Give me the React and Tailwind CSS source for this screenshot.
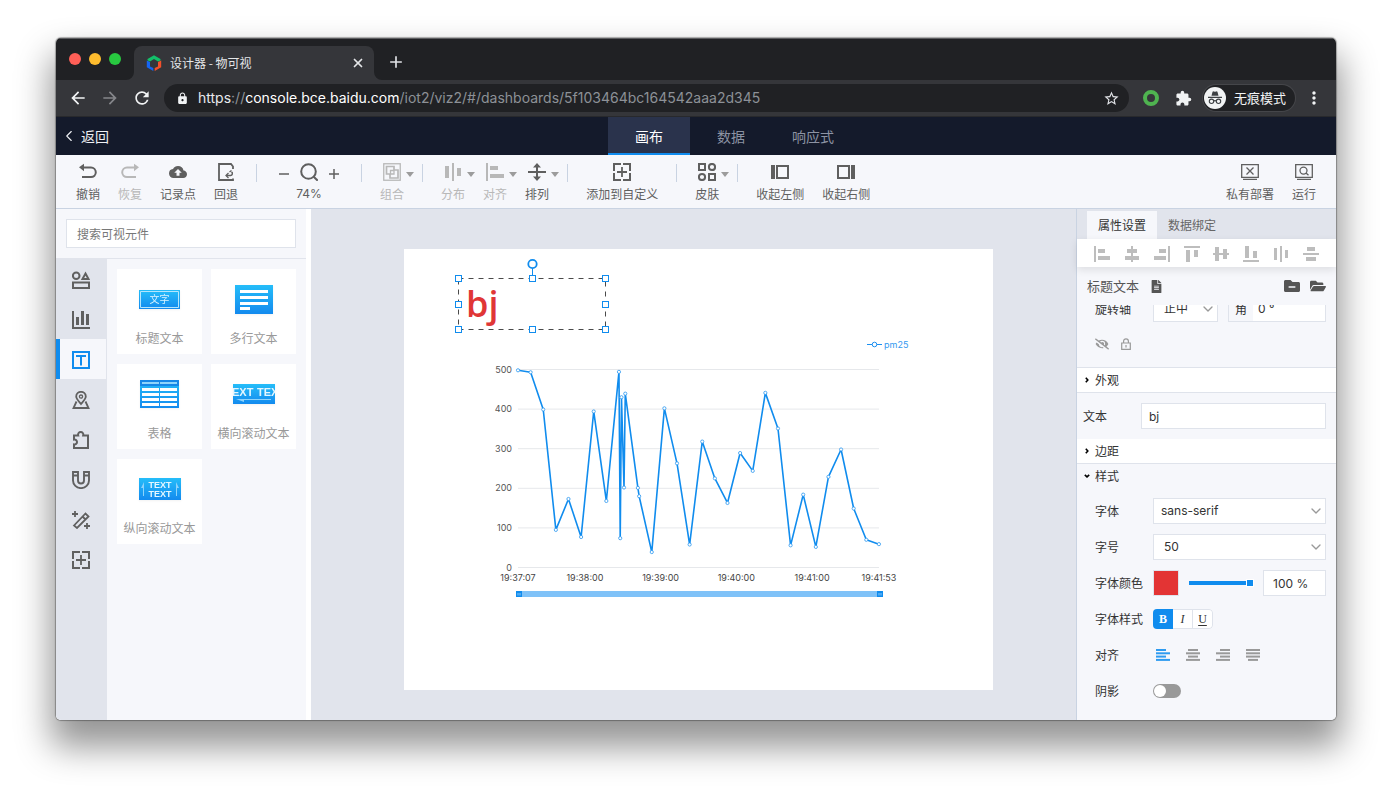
import React from "react";
import {
  MdAdd,
  MdArrowBack,
  MdArrowForward,
  MdCloudUpload,
  MdExtension,
  MdLock,
  MdMoreVert,
  MdRefresh,
  MdStarBorder,
} from "react-icons/md";
import { FaEyeSlash, FaFileAlt, FaFolderMinus, FaFolderOpen } from "react-icons/fa";
import { ChevronDown, ChevronLeft, X } from "lucide-react";

function Svg({ w = 18, h = 18, className = "", children, ...rest }) {
  return (
    <svg
      width={w}
      height={h}
      viewBox={`0 0 ${w} ${h}`}
      fill="none"
      stroke="currentColor"
      strokeWidth="2"
      aria-hidden="true"
      className={`shrink-0 ${className}`}
      {...rest}
    >
      {children}
    </svg>
  );
}

/* ---------- toolbar icons ---------- */

const UndoIcon = () => (
  <Svg>
    <path d="M3 4.5h9a4.800 4.800 0 0 1 0 9.600H3" />
    <path d="M5 .8v7.400L0 4.200z" fill="currentColor" stroke="none" />
  </Svg>
);
const RedoIcon = () => (
  <Svg>
    <path d="M15 4.500H6a4.800 4.800 0 0 0 0 9.600h9" />
    <path d="M13 .8v7.400l5-4z" fill="currentColor" stroke="none" />
  </Svg>
);
const RevertIcon = () => (
  <Svg>
    <path d="M16 6V3.500L14 1H2v16h14v-1.500" strokeWidth="1.800" />
    <path d="M9.500 12.500h4a1.900 1.900 0 0 0 1-3.500" strokeWidth="1.500" />
    <path d="M11.500 10l-2.500 2.500 2.500 2.500M12.500 9l2-1.500" strokeWidth="1.300" />
  </Svg>
);
const SearchIcon = () => (
  <Svg>
    <circle cx="8.500" cy="8.500" r="7.300" />
    <path d="M13.700 13.700l4 4" />
  </Svg>
);
const GroupIcon = () => (
  <Svg strokeWidth="1.700">
    <rect x=".75" y=".75" width="16.500" height="16.500" strokeWidth="1.300" />
    <path d="M11 7V3.500H3.500V11H7" />
    <path d="M11 7h4v8H7v-4" />
    <path d="M7.500 7.500h3.500v3.500H7.500z" strokeWidth="1.300" />
  </Svg>
);
const DistributeIcon = () => (
  <Svg stroke="none" fill="currentColor">
    <path d="M1 3h4v12H1zM8 0h2v18H8zM13 5h4v8h-4z" />
  </Svg>
);
const AlignIcon = () => (
  <Svg stroke="none" fill="currentColor">
    <path d="M0 0h2v18H0zM4 3h8v4H4zM4 11h14v4H4z" />
  </Svg>
);
const ArrangeIcon = () => (
  <Svg>
    <path d="M0 9h18M9 2.500v13" />
    <path d="M9 0l4 4.500H5zM9 18l4-4.500H5z" fill="currentColor" stroke="none" />
  </Svg>
);
const CustomIcon = () => (
  <Svg>
    <path d="M8 1H1v7M10 1h7v7M8 17H1v-7M10 17h7v-7" />
    <path d="M9 4v10M4 9h10" strokeWidth="1.800" />
  </Svg>
);
const SkinIcon = () => (
  <Svg>
    <path d="M1 1h6v6H1zM11 11h6v6h-6z" />
    <circle cx="14" cy="4" r="3.100" />
    <circle cx="4" cy="14" r="3.100" />
  </Svg>
);
const LeftIcon = () => (
  <Svg>
    <path d="M0 2h4v14H0z" fill="currentColor" stroke="none" />
    <path d="M6 3h11v12H6z" />
  </Svg>
);
const RightIcon = () => (
  <Svg>
    <path d="M14 2h4v14h-4z" fill="currentColor" stroke="none" />
    <path d="M1 3h11v12H1z" />
  </Svg>
);
const DeployIcon = () => (
  <Svg strokeWidth="1.300">
    <path d="M.7 1.700h16.600v12.600H.7zM2 16.400h14" />
    <path d="M5.500 4.500l7 7M12.500 4.500l-7 7" />
  </Svg>
);
const RunIcon = () => (
  <Svg strokeWidth="1.300">
    <path d="M.7 1.700h16.600v12.600H.7zM2 16.400h14" />
    <circle cx="8.500" cy="7.600" r="3.500" />
    <path d="M11 10l2.500 2.300" />
  </Svg>
);

const Sep = () => <span className="mx-[9px] mt-[9px] h-[18px] w-px shrink-0 bg-[#c9d3e2]" />;

function Tool({ label, icon, disabled, menu }) {
  return (
    <button
      type="button"
      disabled={disabled}
      className={`relative flex h-full shrink-0 flex-col items-center gap-1 px-[9px] pt-2 ${
        disabled ? "text-[#b8b8b8]" : "text-[#5f5f5f]"
      }`}
    >
      {icon}
      <span className="text-xs leading-[18px] whitespace-nowrap">{label}</span>
      {menu && (
        <span className="absolute top-[17px] -right-px h-0 w-0 border-x-4 border-t-[5px] border-x-transparent border-t-[#9c9c9c]" />
      )}
    </button>
  );
}

/* ---------- browser chrome ---------- */

function TitleBar() {
  return (
    <div className="flex h-[42px] items-end border-t border-[#5c5d60] bg-[#202124] pl-[13px]">
      <div className="mb-[15px] flex gap-2">
        <span className="size-3 rounded-full bg-[#ff5f57]" />
        <span className="size-3 rounded-full bg-[#febc2e]" />
        <span className="size-3 rounded-full bg-[#28c840]" />
      </div>
      <div className="relative ml-[13px] flex h-[34px] w-[240px] items-center rounded-t-lg bg-[#35363a] pr-[9px] pl-3 text-[#e4e6e8]">
        <svg className="absolute bottom-0 -left-2" width="8" height="8" viewBox="0 0 8 8" aria-hidden="true">
          <path d="M8 0v8H0a8 8 0 0 0 8-8z" fill="#35363a" />
        </svg>
        <svg className="absolute -right-2 bottom-0" width="8" height="8" viewBox="0 0 8 8" aria-hidden="true">
          <path d="M0 0v8h8a8 8 0 0 1-8-8z" fill="#35363a" />
        </svg>
        <svg width="16" height="16" viewBox="0 0 16 16" aria-hidden="true">
          <path d="M1.500 4L8 .3 14.500 4v1.500L12 6.500 8 4 4 6.500 1.500 5.200z" fill="#12c06a" />
          <path d="M.8 5.500L4 7v4.500L7.300 13v3L.8 12.200z" fill="#1665f2" />
          <path d="M15.200 5.500L12 7v4.500L8.700 13v3l6.500-3.800z" fill="#f4502b" />
        </svg>
        <span className="ml-2 flex-1 text-xs">设计器 - 物可视</span>
        <button type="button" aria-label="关闭标签页">
          <X size={14} strokeWidth={3} />
        </button>
      </div>
      <button type="button" aria-label="新标签页" className="mb-2 ml-3 text-[#dfe1e5]">
        <MdAdd size={20} />
      </button>
    </div>
  );
}

function AddressBar() {
  return (
    <div className="flex h-[37px] items-center border-b border-[#28292c] bg-[#35363a] pr-3 pl-3 text-[#f1f3f4]">
      <button type="button" aria-label="后退">
        <MdArrowBack size={20} />
      </button>
      <button type="button" aria-label="前进" disabled className="ml-3 text-[#85868a]">
        <MdArrowForward size={20} />
      </button>
      <button type="button" aria-label="刷新" className="ml-3">
        <MdRefresh size={20} />
      </button>
      <div className="ml-3 flex h-7 min-w-0 flex-1 items-center rounded-full bg-[#202124] pr-[9px] pl-3">
        <MdLock size={13} className="shrink-0" />
        <div className="ml-[9px] min-w-0 flex-1 truncate font-[Inter] text-sm text-[#8d9197]">
          <span className="text-[#e8eaed]">https</span>://
          <span className="text-white">console.bce.baidu.com</span>
          /iot2/viz2/#/dashboards/5f103464bc164542aaa2d345
        </div>
        <button type="button" aria-label="收藏">
          <MdStarBorder size={17} className="text-[#dfe1e5]" />
        </button>
      </div>
      <span className="ml-[14px] size-4 rounded-full border-4 border-[#4fb350]" />
      <MdExtension size={17} className="ml-4" />
      <div className="ml-[11px] flex h-[26px] items-center gap-2 rounded-full bg-[#202124] pr-[9px] pl-px ring-1 ring-[#45464a]">
        <svg width="22" height="22" viewBox="0 0 22 22" aria-hidden="true">
          <circle cx="11" cy="11" r="11" fill="#f1f3f4" />
          <path d="M7.500 8.800l1-3.800q.3-.9 1.200-.6l1.300.4 1.300-.4q.9-.3 1.200.6l1 3.800z" fill="#3c4043" />
          <path d="M4 10.300h14" stroke="#3c4043" strokeWidth="1.300" />
          <g fill="none" stroke="#3c4043" strokeWidth="1.100">
            <circle cx="7.500" cy="14.300" r="2.200" />
            <circle cx="14.500" cy="14.300" r="2.200" />
            <path d="M9.700 14q1.300-.8 2.600 0" />
          </g>
        </svg>
        <span className="text-[13px] whitespace-nowrap">无痕模式</span>
      </div>
      <button type="button" aria-label="更多" className="ml-[9px]">
        <MdMoreVert size={20} />
      </button>
    </div>
  );
}

function AppHeader() {
  const tabs = ["画布", "数据", "响应式"];
  return (
    <header className="flex h-[38px] bg-[#141a2b] text-sm">
      <a href="#back" className="flex w-[70px] shrink-0 items-center pl-1 text-[#eef0f4]">
        <ChevronLeft size={18} strokeWidth={1.500} />
        <span className="ml-[3px]">返回</span>
      </a>
      <nav className="flex flex-1 justify-center">
        {tabs.map((t, i) => (
          <button
            key={t}
            type="button"
            className={`w-[82px] border-b-2 pt-px ${
              i === 0 ? "border-[#108cee] bg-[#2a334c] text-white" : "border-transparent text-[#8c93a3]"
            }`}
          >
            {t}
          </button>
        ))}
      </nav>
    </header>
  );
}

function Toolbar() {
  return (
    <div className="flex h-[54px] border-b border-[#c9d3e2] bg-[#f6f7fb] px-[11px]">
      <Tool label="撤销" icon={<UndoIcon />} />
      <Tool label="恢复" icon={<RedoIcon />} disabled />
      <Tool label="记录点" icon={<MdCloudUpload size={18} />} />
      <Tool label="回退" icon={<RevertIcon />} />
      <Sep />
      <div className="flex w-[86px] shrink-0 flex-col items-center gap-1 pt-2 text-[#5f5f5f]">
        <div className="flex items-center gap-[11px]">
          <button type="button" aria-label="缩小">
            <Svg w={10} strokeWidth="1.500">
              <path d="M0 11h10" />
            </Svg>
          </button>
          <SearchIcon />
          <button type="button" aria-label="放大">
            <Svg w={10} strokeWidth="1.500">
              <path d="M0 11h10M5 6v10" />
            </Svg>
          </button>
        </div>
        <span className="font-[Inter] text-xs leading-[18px]">74%</span>
      </div>
      <Sep />
      <Tool label="组合" icon={<GroupIcon />} disabled menu />
      <Sep />
      <Tool label="分布" icon={<DistributeIcon />} disabled menu />
      <Tool label="对齐" icon={<AlignIcon />} disabled menu />
      <Tool label="排列" icon={<ArrangeIcon />} menu />
      <Sep />
      <Tool label="添加到自定义" icon={<CustomIcon />} />
      <Sep />
      <Tool label="皮肤" icon={<SkinIcon />} menu />
      <Sep />
      <Tool label="收起左侧" icon={<LeftIcon />} />
      <Tool label="收起右侧" icon={<RightIcon />} />
      <div className="flex-1" />
      <Tool label="私有部署" icon={<DeployIcon />} />
      <Tool label="运行" icon={<RunIcon />} />
    </div>
  );
}

/* ---------- left panel ---------- */

const railIcons = [
  {
    name: "图形",
    icon: (
      <Svg>
        <circle cx="4.200" cy="4.800" r="3.300" />
        <path d="M13.500 2.500l3 5.500h-6z" />
        <path d="M1 11.500h16V17H1z" />
      </Svg>
    ),
  },
  {
    name: "图表",
    icon: (
      <Svg stroke="none" fill="currentColor">
        <path d="M0 0h2v16h16v2H0zM4 6h3v8H4zM9 0h3v14H9zM14 3h3v11h-3z" />
      </Svg>
    ),
  },
  {
    name: "文本",
    icon: (
      <Svg>
        <path d="M1 1h16v16H1z" />
        <path d="M4 5h10M9 5v9.500" />
      </Svg>
    ),
  },
  {
    name: "地图",
    icon: (
      <Svg strokeWidth="1.800">
        <path d="M9 13C6 9.500 4.200 7.800 4.200 5.600a4.800 4.800 0 0 1 9.600 0C13.800 7.800 12 9.500 9 13z" />
        <circle cx="9" cy="5.600" r="1.600" strokeWidth="1.300" />
        <path d="M4.500 10.500L1.500 17h15l-3-6.500" />
      </Svg>
    ),
  },
  {
    name: "插件",
    icon: (
      <Svg>
        <path d="M2 4.500h4.200c-.6-2 .8-3.500 2.500-3.500s3.100 1.500 2.500 3.500H16V17H2v-3.600c4 .6 4-5.400 0-4.800z" />
      </Svg>
    ),
  },
  {
    name: "磁铁",
    icon: (
      <Svg strokeWidth="1.900">
        <path d="M1 1h5v8.500a3 3 0 0 0 6 0V1h5v8.500a8 7.600 0 0 1-16 0zM1 4.500h5M12 4.500h5" />
      </Svg>
    ),
  },
  {
    name: "特效",
    icon: (
      <Svg strokeWidth="1.800">
        <path d="M2 14.500L13.500 2.500l3 3L5 17zM10.500 5.500l3 3" />
        <path d="M3 0v6M0 3h6M15 12v6M12 15h6" />
      </Svg>
    ),
  },
  { name: "自定义", icon: <CustomIcon /> },
];

function Gradient({ id }) {
  return (
    <defs>
      <linearGradient id={id} x1="0" y1="0" x2="0" y2="1">
        <stop offset="0" stopColor="#25bdf9" />
        <stop offset="1" stopColor="#138aee" />
      </linearGradient>
    </defs>
  );
}

const glyphText = { fill: "#e4f6ff", fontFamily: '"Liberation Sans", sans-serif', fontWeight: 700 };

const widgets = [
  {
    label: "标题文本",
    art: (
      <svg width="41" height="19" viewBox="0 0 41 19" aria-hidden="true" className="drop-shadow-xs">
        <Gradient id="g1" />
        <rect width="41" height="19" fill="url(#g1)" />
        <path d="M1.500 1.500h38v16h-38z" fill="none" stroke="#b5e6fd" />
        <text x="20.500" y="13" textAnchor="middle" fontSize="10" fill="#d9f3ff">
          文字
        </text>
      </svg>
    ),
  },
  {
    label: "多行文本",
    art: (
      <svg width="38" height="29" viewBox="0 0 38 29" aria-hidden="true" className="drop-shadow-xs">
        <Gradient id="g2" />
        <rect width="38" height="29" fill="url(#g2)" />
        <path d="M5 5h28v3H5zM5 11h28v3H5zM5 17h28v3H5zM5 22h10v3H5z" fill="#fff" />
      </svg>
    ),
  },
  {
    label: "表格",
    art: (
      <svg width="39" height="28" viewBox="0 0 39 28" aria-hidden="true" className="drop-shadow-xs">
        <Gradient id="g3" />
        <rect width="39" height="28" fill="url(#g3)" />
        <rect width="39" height="6" fill="#1787e6" />
        <path d="M2 3h17M20 3h17" stroke="#8ed4fb" strokeWidth="2" />
        <path
          d="M2 9.500h17M20 9.500h17M2 14.500h17M20 14.500h17M2 19.500h17M20 19.500h17M2 24.500h17M20 24.500h17"
          stroke="#fff"
          strokeWidth="3"
        />
      </svg>
    ),
  },
  {
    label: "横向滚动文本",
    art: (
      <svg width="42" height="20" viewBox="0 0 42 20" aria-hidden="true" className="drop-shadow-xs">
        <Gradient id="g4" />
        <rect width="42" height="20" fill="url(#g4)" />
        <text x="-1" y="12" fontSize="11" {...glyphText}>
          EXT
        </text>
        <text x="24" y="12" fontSize="11" {...glyphText}>
          TEX
        </text>
        <path d="M3 15h35v1H11v2z" fill="#8dd3fb" />
      </svg>
    ),
  },
  {
    label: "纵向滚动文本",
    art: (
      <svg width="42" height="22" viewBox="0 0 42 22" aria-hidden="true" className="drop-shadow-xs">
        <Gradient id="g5" />
        <rect width="42" height="22" fill="url(#g5)" />
        <text x="21" y="10" textAnchor="middle" fontSize="9" {...glyphText}>
          TEXT
        </text>
        <text x="21" y="19" textAnchor="middle" fontSize="9" {...glyphText}>
          TEXT
        </text>
        <path d="M5 4v14H4V10H2zM37 4v14h1V10h2z" fill="#8dd3fb" />
      </svg>
    ),
  },
];

function LeftPanel() {
  return (
    <aside className="flex w-[255px] shrink-0 flex-col border-r-[5px] border-white bg-[#f6f7fb]">
      <div className="border-b border-[#e1e4ec] p-[10px]">
        <input
          type="search"
          aria-label="搜索可视元件"
          placeholder="搜索可视元件"
          className="block h-[29px] w-full border border-[#dfe3eb] bg-white px-[10px] text-xs outline-none placeholder:text-[#777]"
        />
      </div>
      <div className="flex flex-1">
        <nav className="flex w-[51px] shrink-0 flex-col border-r border-[#e1e4ec] bg-[#e1e4ec]">
          {railIcons.map((r, i) => (
            <button
              key={r.name}
              type="button"
              aria-label={r.name}
              className={`flex h-10 items-center border-l-4 pt-[2px] pl-3 ${
                i === 2 ? "border-[#108cee] bg-[#f6f7fb] text-[#108cee]" : "border-transparent text-[#606060]"
              }`}
            >
              {r.icon}
            </button>
          ))}
        </nav>
        <div className="grid flex-1 auto-rows-[85px] grid-cols-2 gap-x-[9px] gap-y-[10px] p-[10px]">
          {widgets.map((w) => (
            <button key={w.label} type="button" className="flex flex-col items-center bg-white pt-[10px]">
              <span className="flex h-10 items-center">{w.art}</span>
              <span className="mt-[11px] text-xs leading-4 whitespace-nowrap text-[#999]">{w.label}</span>
            </button>
          ))}
        </div>
      </div>
    </aside>
  );
}

/* ---------- canvas ---------- */

const samples = [
  [0, 498], [10, 493], [20, 399], [30, 95], [40, 173], [50, 77], [60, 394], [70, 168],
  [80, 494], [81, 74], [82, 430], [84, 202], [85, 439], [95, 201], [96, 180], [106, 39],
  [116, 402], [126, 263], [136, 58], [146, 318], [156, 225], [166, 163], [176, 289],
  [186, 244], [196, 441], [206, 351], [216, 56], [226, 184], [236, 52], [246, 229],
  [256, 298], [266, 149], [276, 70], [286, 59],
];
const px = (t) => 30 + t * 1.262;
const py = (v) => 228.5 - v * 0.396;
const ticks = [[0, "19:37:07"], [53, "19:38:00"], [113, "19:39:00"], [173, "19:40:00"], [233, "19:41:00"], [286, "19:41:53"]];

function Chart() {
  return (
    <svg
      className="absolute top-[90px] left-[84px]"
      width="430"
      height="265"
      viewBox="0 0 430 265"
      role="img"
      aria-label="pm25"
      fontFamily="Inter, sans-serif"
      fontSize="9"
    >
      <g stroke="#1b8ff0" fill="#fff">
        <path d="M379 5.500h15" />
        <circle cx="386.500" cy="5.500" r="2.300" />
      </g>
      <text x="396" y="9" fill="#3399f0">
        pm25
      </text>
      {[0, 100, 200, 300, 400, 500].map((v) => (
        <g key={v}>
          <path d={`M30 ${py(v)}h361`} stroke="#e6e8eb" />
          <text x="24" y={py(v) + 3} textAnchor="end" fill="#555">
            {v}
          </text>
        </g>
      ))}
      {ticks.map(([t, label]) => (
        <text key={t} x={px(t)} y="242" textAnchor="middle" fill="#444">
          {label}
        </text>
      ))}
      <polyline
        points={samples.map(([t, v]) => `${px(t)},${py(v)}`).join(" ")}
        fill="none"
        stroke="#108cee"
        strokeWidth="1.600"
        strokeLinejoin="round"
      />
      {samples.map(([t, v]) => (
        <circle key={t} cx={px(t)} cy={py(v)} r="1.600" fill="#fff" stroke="#2a97f0" strokeWidth=".8" />
      ))}
      <rect x="28" y="252" width="366" height="6" fill="#7fc2f8" />
      <path d="M28 252h6v6h-6zM389 252h6v6h-6z" fill="#108cee" />
      <path d="M30 254v2.500M32 254v2.500M391 254v2.500M393 254v2.500" stroke="#bfe0fb" strokeWidth=".7" />
    </svg>
  );
}

function SelectionFrame() {
  const xs = [4.5, 78.5, 151.5];
  const ys = [18.5, 44.5, 69.5];
  return (
    <svg
      className="absolute top-[11px] left-[50px] overflow-visible"
      width="156"
      height="74"
      viewBox="0 0 156 74"
      aria-hidden="true"
    >
      <rect x="4.500" y="18.500" width="147" height="51" fill="none" stroke="#4a4a4a" strokeDasharray="5 5" />
      <path d="M78.500 8v8" stroke="#108cee" />
      <circle cx="78.500" cy="4" r="4.200" fill="#fff" stroke="#108cee" strokeWidth="1.800" />
      {ys.map((y, r) =>
        xs.map((x, c) =>
          r === 1 && c === 1 ? null : (
            <rect key={`${r}${c}`} x={x - 3} y={y - 3} width="6" height="6" fill="#fff" stroke="#108cee" />
          )
        )
      )}
    </svg>
  );
}

function Canvas() {
  return (
    <main className="min-w-0 flex-1 bg-[#e1e4ec] pt-10 pb-[30px] pl-[10px]">
      <div className="relative mx-auto h-[441px] w-[589px] bg-white">
        <div className="absolute top-[29px] left-[54px] flex h-[52px] w-[148px] items-center pl-2 font-['Open_Sans'] text-[36px] leading-[50px] font-semibold text-[#e03636]">
          bj
        </div>
        <SelectionFrame />
        <Chart />
      </div>
    </main>
  );
}

/* ---------- right panel ---------- */

const alignTools = [
  ["左对齐", "M0 0h2v16H0zM4 3h7v4H4zM4 10h12v4H4z"],
  ["水平居中", "M7 0h2v16H7zM3 3h10v4H3zM1 10h14v4H1z"],
  ["右对齐", "M14 0h2v16h-2zM5 3h7v4H5zM0 10h12v4H0z"],
  ["顶对齐", "M0 0h16v2H0zM2 4h4v12H2zM10 4h4v7h-4z"],
  ["垂直居中", "M0 7h16v2H0zM2 1h4v14H2zM10 3h4v10h-4z"],
  ["底对齐", "M0 14h16v2H0zM2 0h4v12H2zM10 5h4v7h-4z"],
  ["水平分布", "M7 0h2v16H7zM1 2h3v12H1zM12 4h3v8h-3z"],
  ["垂直分布", "M0 7h16v2H0zM4 1h8v4H4zM3 11h10v4H3z"],
];

const field = "h-[26px] border border-[#dfe3eb] bg-white font-[Inter,'Noto_Sans_CJK_SC',sans-serif] text-xs text-[#333] outline-none";

function Select({ id, value, width = "w-full", pad = "pl-[7px]" }) {
  return (
    <span className={`relative block ${width}`}>
      <select id={id} defaultValue={value} className={`block w-full appearance-none ${field} ${pad}`}>
        <option>{value}</option>
      </select>
      <ChevronDown size={16} className="pointer-events-none absolute top-[5px] right-[2px] text-[#999]" />
    </span>
  );
}

function Row({ label, id, children }) {
  return (
    <div className="flex h-9 items-center pr-[10px] pl-[18px]">
      {id ? (
        <label htmlFor={id} className="w-[58px] shrink-0">
          {label}
        </label>
      ) : (
        <span className="w-[58px] shrink-0">{label}</span>
      )}
      {children}
    </div>
  );
}

function Caret({ open }) {
  return (
    <svg width="6" height="6" viewBox="0 0 6 6" aria-hidden="true" className="mr-[5px]">
      <path d={open ? "M.8 1.800l2.200 2 2.200-2" : "M1.800 .8l2 2.200-2 2.200"} fill="none" stroke="#000" strokeWidth="1.600" />
    </svg>
  );
}

function TextAlign({ label, widths, anchor, active }) {
  return (
    <button type="button" aria-label={label} className={active ? "text-[#2e9bf0]" : "text-[#999]"}>
      <svg width="14" height="12" viewBox="0 0 14 12" aria-hidden="true" className="block">
        {widths.map((w, i) => (
          <rect
            key={i}
            x={anchor === "start" ? 0 : anchor === "end" ? 14 - w : (14 - w) / 2}
            y={i * 3.300}
            width={w}
            height="2"
            fill="currentColor"
          />
        ))}
      </svg>
    </button>
  );
}

function RightPanel() {
  return (
    <aside className="flex w-[260px] shrink-0 flex-col border-l border-[#c9d3e2] bg-[#f6f7fb] text-xs text-[#333]">
      <div className="flex h-[30px] items-end bg-[#e1e4ec] pl-[10px]">
        <button type="button" className="h-7 w-[70px] bg-[#f6f7fb] text-[#333]">
          属性设置
        </button>
        <button type="button" className="h-7 w-[70px] text-[#666]">
          数据绑定
        </button>
      </div>
      <div className="relative flex h-7 shrink-0 items-center justify-between bg-white pt-[2px] pr-[17px] pl-[17px] text-[#bdbdbd] shadow-[0_3px_8px_rgba(0,0,0,0.1)]">
        {alignTools.map(([name, d]) => (
          <button key={name} type="button" aria-label={name}>
            <Svg w={16} h={16} stroke="none" fill="currentColor" className="block">
              <path d={d} />
            </Svg>
          </button>
        ))}
      </div>
      <div className="flex h-[38px] shrink-0 items-center pr-[10px] pl-[10px] text-[#555]">
        <span className="text-[13px]">标题文本</span>
        <FaFileAlt size={13} className="ml-[11px]" />
        <span className="flex-1" />
        <button type="button" aria-label="收起">
          <FaFolderMinus size={16} />
        </button>
        <button type="button" aria-label="展开" className="ml-[10px]">
          <FaFolderOpen size={16} />
        </button>
      </div>

      <div className="min-h-0 flex-1 overflow-hidden">
        <div className="-mt-[9px] flex h-[26px] items-center pr-[10px] pl-[18px]">
          <label htmlFor="axis" className="w-[58px]">
            旋转轴
          </label>
          <Select id="axis" value="正中" width="w-[65px]" pad="pl-[10px]" />
          <label className="ml-[10px] flex h-[26px] flex-1 items-center border border-[#dfe3eb] bg-white">
            <span className="flex h-full w-6 shrink-0 items-center justify-center bg-[#f6f7fb]">角</span>
            <input
              defaultValue="0 °"
              aria-label="角度"
              className="w-full min-w-0 pl-[5px] font-[Inter] outline-none"
            />
          </label>
        </div>
        <div className="flex h-[45px] items-center gap-3 pb-[2px] pl-[18px] text-[#9a9a9a]">
          <button type="button" aria-label="隐藏">
            <FaEyeSlash size={14} />
          </button>
          <button type="button" aria-label="锁定">
            <Svg w={10} h={12} strokeWidth="1.200" className="block">
              <path d="M.7 5h8.600v6.300H.7zM2.600 5V3.200a2.400 2.400 0 0 1 4.800 0V5M5 7v2.400" />
            </Svg>
          </button>
        </div>
        <button type="button" className="flex h-[26px] w-full items-center border-y border-[#dfe3eb] bg-white pl-[7px]">
          <Caret />
          外观
        </button>
        <div className="flex h-[46px] items-center pr-[10px] pl-[6px]">
          <label htmlFor="content" className="w-[58px] shrink-0">
            文本
          </label>
          <input id="content" defaultValue="bj" className={`w-full min-w-0 px-[7px] ${field}`} />
        </div>
        <button type="button" className="flex h-[25px] w-full items-center border-b border-[#dfe3eb] bg-white pl-[7px]">
          <Caret />
          边距
        </button>
        <button type="button" className="flex h-[29px] w-full items-center pb-[6px] pl-[7px]">
          <Caret open />
          样式
        </button>
        <Row label="字体" id="family">
          <Select id="family" value="sans-serif" />
        </Row>
        <Row label="字号" id="size">
          <Select id="size" value="50" pad="pl-[10px]" />
        </Row>
        <Row label="字体颜色">
          <button type="button" aria-label="字体颜色" className="size-[26px] shrink-0 border border-[#dfe3eb] bg-[#e33434]" />
          <input
            type="range"
            aria-label="不透明度"
            defaultValue="100"
            className="ml-[10px] h-2 w-[65px] shrink-0 appearance-none bg-transparent [&::-webkit-slider-runnable-track]:h-1 [&::-webkit-slider-runnable-track]:bg-[#108cee] [&::-webkit-slider-thumb]:-mt-[2px] [&::-webkit-slider-thumb]:size-2 [&::-webkit-slider-thumb]:appearance-none [&::-webkit-slider-thumb]:border [&::-webkit-slider-thumb]:border-white [&::-webkit-slider-thumb]:bg-[#108cee]"
          />
          <input aria-label="不透明度百分比" defaultValue="100 %" className={`ml-[9px] w-full min-w-0 pl-[9px] ${field}`} />
        </Row>
        <Row label="字体样式">
          <div className="flex h-5 overflow-hidden rounded bg-white font-['Liberation_Serif'] text-xs">
            <button type="button" className="w-5 bg-[#108cee] font-bold text-white">
              B
            </button>
            <button type="button" className="w-5 border-y border-r border-[#dfe3eb] italic">
              I
            </button>
            <button type="button" className="w-5 rounded-r border-y border-r border-[#dfe3eb] underline underline-offset-2">
              U
            </button>
          </div>
        </Row>
        <Row label="对齐">
          <div className="flex gap-4 pl-[3px]">
            <TextAlign label="左" widths={[10, 14, 10, 14]} anchor="start" active />
            <TextAlign label="中" widths={[10, 14, 10, 14]} anchor="middle" />
            <TextAlign label="右" widths={[10, 14, 10, 14]} anchor="end" />
            <TextAlign label="两端" widths={[14, 14, 14, 10]} anchor="middle" />
          </div>
        </Row>
        <Row label="阴影" id="shadow">
          <input
            id="shadow"
            type="checkbox"
            role="switch"
            className="h-[14px] w-7 appearance-none rounded-full bg-[#999] p-px before:block before:size-3 before:rounded-full before:bg-white checked:bg-[#108cee]"
          />
        </Row>
      </div>
    </aside>
  );
}

export default function App() {
  return (
    <div className="flex min-h-screen bg-white px-14 pt-[38px] pb-[74px] font-['Noto_Sans_CJK_SC',sans-serif]">
      <div className="flex min-w-0 flex-1 flex-col rounded-[5px] shadow-[0_0_1px_1px_rgba(0,0,0,0.3),0_22px_35px_5px_rgba(0,0,0,0.42)]">
        <div className="flex min-w-0 flex-1 flex-col overflow-hidden rounded-[5px]">
          <TitleBar />
          <AddressBar />
          <AppHeader />
          <Toolbar />
          <div className="flex min-h-0 flex-1">
            <LeftPanel />
            <Canvas />
            <RightPanel />
          </div>
        </div>
      </div>
    </div>
  );
}
